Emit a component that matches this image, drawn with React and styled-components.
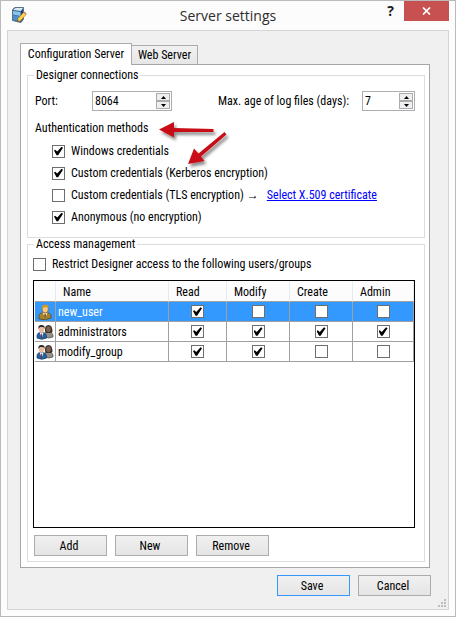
import React, { useState } from "react";
import styled, { createGlobalStyle, css } from "styled-components";

const GlobalStyle = createGlobalStyle`
  *, *::before, *::after { box-sizing: border-box; }
  body { margin: 0; background: #fcfcfc; }
  body, button, input { font: 12px/14px "Roboto Condensed", Roboto, "Liberation Sans", Arial, sans-serif; color: #000; }
`;

const Window = styled.main`
  display: flex;
  flex-direction: column;
  min-height: 100vh;
  padding: 0 6px 6px;
  border: 1px solid #bababa;
  background: #fcfcfc;
`;

const TitleBar = styled.header`
  display: grid;
  grid-template-columns: 72px 1fr 72px;
  height: 29px;
`;

const TitleIcon = styled.span`
  padding: 5px 0 0 4px;
  line-height: 0;
`;

const Title = styled.h1`
  margin: 0;
  padding-top: 4px;
  font: 400 14px/22px "Open Sans", "Noto Sans", sans-serif;
  text-align: center;
  color: #2c2c2c;
`;

const TitleControls = styled.div`
  display: flex;
  justify-content: flex-end;
  align-items: flex-start;
`;

const HelpButton = styled.button`
  width: 27px;
  height: 20px;
  padding: 0;
  border: 0;
  background: none;
  font: 700 14px/20px "Open Sans", sans-serif;
  color: #1c1c1c;
`;

const CloseButton = styled.button`
  display: grid;
  place-items: center;
  width: 45px;
  height: 20px;
  padding: 0;
  border: 0;
  background: #c75050;
`;

const Client = styled.div`
  flex: 1;
  display: flex;
  flex-direction: column;
  padding: 12px 18px 13px 12px;
  border: 1px solid #d4d4d4;
  background: #f0f0f0;
  position: relative;
`;

const TabList = styled.div`
  display: flex;
  align-items: flex-end;
`;

const Tab = styled.button`
  width: 66px;
  height: 19px;
  padding: 0 3px;
  border: 1px solid #acacac;
  border-left: 0;
  border-bottom: 0;
  background: linear-gradient(#f1f1f1, #e6e6e6);
  white-space: nowrap;
  ${(p) =>
    p.$active &&
    css`
      position: relative;
      width: 112px;
      height: 22px;
      margin-bottom: -1px;
      padding-bottom: 2px;
      border-left: 1px solid #acacac;
      background: #fff;
    `}
`;

const Panel = styled.section`
  flex: 1;
  display: flex;
  flex-direction: column;
  padding: 4px 4px 5px 6px;
  border: 1px solid #a6a6a6;
  background: #fff;
`;

const Group = styled.fieldset`
  flex: ${(p) => (p.$grow ? 1 : "none")};
  min-width: 0;
  margin: 0;
  padding: 0 9px 5px 5px;
  border: 1px solid #dcdcdc;
`;

const Legend = styled.legend`
  margin-left: 1px;
  padding: 0 2px;
  line-height: 12px;
`;

const FieldRow = styled.div`
  display: flex;
  align-items: center;
  justify-content: space-between;
  padding: 10px 0 0 2px;
`;

const Field = styled.label`
  display: flex;
  align-items: center;
`;

const FieldLabel = styled.span`
  width: ${(p) => p.$width};
`;

const Spinner = styled.span`
  display: flex;
  width: ${(p) => p.$width};
  height: 20px;
  padding: 1px;
  border: 1px solid #abadb3;
  background: #fff;
`;

const SpinnerInput = styled.input`
  flex: 1;
  min-width: 0;
  padding: 0 1px;
  border: 0;
  outline: 0;
  background: transparent;
`;

const SpinnerButtons = styled.span`
  display: grid;
  grid-template-rows: 8px 8px;
  width: 14px;
`;

const SpinnerButton = styled.button`
  display: grid;
  place-items: center;
  padding: 0;
  border: 1px solid #acacac;
  background: #efefef;
  line-height: 0;
`;

const Methods = styled.div`
  position: relative;
  padding: 10px 0 7px 2px;
`;

const SubHeading = styled.h2`
  margin: 0 0 8px;
  font: inherit;
`;

const OptionList = styled.div`
  display: flex;
  flex-direction: column;
  gap: 6px;
  padding-left: 17px;
`;

const OptionRow = styled.div`
  display: flex;
  align-items: center;
  height: 16px;
  white-space: nowrap;
`;

const OptionLabel = styled.label`
  display: flex;
  align-items: center;
  gap: 6px;
`;

const Arrow = styled.span`
  margin: 0 8px 0 3px;
  font-family: "Liberation Sans", Arial, sans-serif;
`;

const Link = styled.a`
  color: #0000ff;
  text-decoration: underline;
`;

const CheckInput = styled.input`
  appearance: none;
  flex: none;
  display: inline-block;
  width: 13px;
  height: 13px;
  margin: 0;
  padding: 1px;
  border: 1px solid #6e6e6e;
  background: #fff;
  vertical-align: middle;
  &:checked::before {
    content: "";
    display: block;
    width: 9px;
    height: 9px;
    background: #000;
    clip-path: polygon(0 44%, 14% 36%, 36% 56%, 84% 4%, 100% 14%, 46% 96%, 28% 96%);
  }
`;

const Callout = styled.svg`
  position: absolute;
  left: 125px;
  top: 9px;
  pointer-events: none;
`;

const Restrict = styled.div`
  padding: 6px 0 8px;
`;

const GridBox = styled.div`
  min-height: 248px;
  padding-left: 1px;
  border: 1px solid #000;
  background: #fff;
`;

const Grid = styled.table`
  width: 100%;
  table-layout: fixed;
  border-collapse: separate;
  border-spacing: 0;
`;

const HeadCell = styled.th`
  width: ${(p) => p.$width};
  height: 21px;
  padding: 1px 0 0 7px;
  border-right: 1px solid #e3ebf4;
  border-bottom: 1px solid #a0a0a0;
  background: #fcfcfd;
  font-weight: 400;
  text-align: left;
`;

const Row = styled.tr`
  height: 20px;
  background: ${(p) => (p.$selected ? "#3399ff" : "#fff")};
  color: ${(p) => (p.$selected ? "#fff" : "#000")};
`;

const Cell = styled.td`
  height: 20px;
  padding: ${(p) => (p.$name ? "0 2px" : "0")};
  border-right: 1px solid #a0a0a0;
  border-bottom: 1px solid #a0a0a0;
  text-align: ${(p) => (p.$name ? "left" : "center")};
  line-height: ${(p) => (p.$name ? "14px" : "0")};
`;

const ButtonRow = styled.div`
  display: flex;
  justify-content: ${(p) => (p.$end ? "flex-end" : "flex-start")};
  gap: 8px;
  padding: ${(p) => (p.$end ? "7px 0 0" : "7px 0 0 1px")};
  margin-right: ${(p) => (p.$end ? "-1px" : "0")};
`;

const PushButton = styled.button`
  width: 73px;
  height: 21px;
  padding: 0 3px 0 0;
  border: 1px solid ${(p) => (p.$primary ? "#3399ff" : "#acacac")};
  background: linear-gradient(#f0f0f0, #e5e5e5);
`;

const Grip = styled.svg`
  position: absolute;
  right: 2px;
  bottom: 2px;
`;

function ServerIcon() {
  return (
    <svg width="16" height="18" viewBox="0 0 16 18" aria-hidden="true">
      <path d="M1.500 3.500 4 1.500H12.500V13L10 16.500 1.500 14.500Z" fill="#2f6190" stroke="#5f7183" />
      <path d="M2 4 4.500 2H12L10 5Z" fill="#d8e9f6" />
      <path d="M2 5 9.500 6V10L2 8.500Z" fill="#8cc4ee" />
      <path d="M2 9 9.500 10.500V15.500L2 14Z" fill="#4a8fcc" />
      <path d="M10 5.500 12 3V12L10 15Z" fill="#1c4268" />
      <path d="M7 12.500 12.500 6.500 15 8.500 9.500 14.800 6.300 15.800Z" fill="#ffd54a" stroke="#a06a16" strokeWidth=".6" />
      <path d="M12.500 6.500 13.500 5.600 15.700 7.500 15 8.500Z" fill="#d98080" />
      <path d="M6.300 15.800 6.800 14 8 15.200Z" fill="#333" />
    </svg>
  );
}

function UserIcon() {
  return (
    <svg width="14" height="16" viewBox="0 0 14 16" aria-hidden="true">
      <path d="M1 15V12.500C1 9.500 3 8.500 7 8.500S13 9.500 13 12.500V14Q7 17 1 15Z" fill="#a5832f" stroke="#5f4a17" strokeWidth=".8" />
      <path d="M4.500 8.500H9.500L7.500 13.500Z" fill="#fff4d8" />
      <path d="M6.600 9.500H7.500L8 12 7.200 14 6.300 12Z" fill="#6b4512" />
      <ellipse cx="7.200" cy="5" rx="3.200" ry="4" fill="#f2cb8a" stroke="#87602a" strokeWidth=".8" />
      <path d="M3.700 6Q3 .7 7 .6T10.500 4L9 3Q6 3.500 5 4Z" fill="#c99a2c" />
    </svg>
  );
}

function GroupIcon() {
  return (
    <svg width="18" height="16" viewBox="0 0 18 16" aria-hidden="true">
      <path d="M8 12Q8 7.500 12 7.500T17 11V13Q13 15 8 13Z" fill="#968f86" stroke="#514a45" strokeWidth=".7" />
      <path d="M9 7Q8.500 1 12.500 1T16.500 8L15 9H10Z" fill="#3a332e" />
      <ellipse cx="12.500" cy="5.200" rx="2.200" ry="3" fill="#80604d" />
      <path d="M1 14V12Q1 8.300 5.500 8.300T10.500 12V14Q6 16.500 1 14Z" fill="#1e65a8" stroke="#173b65" strokeWidth=".7" />
      <path d="M3.500 8.500H7.500L6 13.500Z" fill="#fff" />
      <path d="M5.200 9.500H6L6.300 13 5.600 14 5 12.500Z" fill="#a12020" />
      <ellipse cx="5.500" cy="5" rx="2.600" ry="3.500" fill="#eab99a" />
      <path d="M2.500 5Q1.700 1 5.500 1T8.600 5L7.300 3H4Z" fill="#252a32" />
    </svg>
  );
}

function CalloutArrows() {
  return (
    <Callout width="76" height="54" viewBox="0 0 76 54" aria-hidden="true">
      <defs>
        <filter id="softShadow" x="-20%" y="-20%" width="150%" height="150%">
          <feDropShadow dx="2" dy="3" stdDeviation="1.500" floodColor="#000" floodOpacity=".45" />
        </filter>
      </defs>
      <g fill="#c91018" filter="url(#softShadow)">
        <path d="M1 9.500 16 2V8L55.500 9V12L16 12V17.500Z" />
        <path d="M30 44 36 28.500 40.500 33.500 66.500 12 68.500 14.500 43 36.500 46.500 41Z" />
      </g>
    </Callout>
  );
}

function SpinField({ label, value, labelWidth, width }) {
  const [current, setCurrent] = useState(value);
  const step = (n) => setCurrent((v) => String(Number(v) + n));
  return (
    <Field>
      <FieldLabel $width={labelWidth}>{label}</FieldLabel>
      <Spinner $width={width}>
        <SpinnerInput aria-label={label} value={current} onChange={(e) => setCurrent(e.target.value)} />
        <SpinnerButtons>
          <SpinnerButton type="button" aria-label="Increase" onClick={() => step(1)}>
            <svg width="5" height="3"><path d="M0 3H5L2.500 0Z" /></svg>
          </SpinnerButton>
          <SpinnerButton type="button" aria-label="Decrease" onClick={() => step(-1)}>
            <svg width="5" height="3"><path d="M0 0H5L2.500 3Z" /></svg>
          </SpinnerButton>
        </SpinnerButtons>
      </Spinner>
    </Field>
  );
}

function Option({ label, checked, children }) {
  return (
    <OptionRow>
      <OptionLabel>
        <CheckInput type="checkbox" defaultChecked={checked} />
        {label}
      </OptionLabel>
      {children}
    </OptionRow>
  );
}

const rights = ["Read", "Modify", "Create", "Admin"];

const accounts = [
  { name: "new_user", icon: UserIcon, selected: true, granted: ["Read"] },
  { name: "administrators", icon: GroupIcon, granted: rights },
  { name: "modify_group", icon: GroupIcon, granted: ["Read", "Modify"] },
];

export default function App() {
  return (
    <>
      <GlobalStyle />
      <Window>
        <TitleBar>
          <TitleIcon><ServerIcon /></TitleIcon>
          <Title>Server settings</Title>
          <TitleControls>
            <HelpButton type="button" aria-label="Help">?</HelpButton>
            <CloseButton type="button" aria-label="Close">
              <svg width="9" height="8" viewBox="0 0 9 8">
                <path d="M1 .5 8 7.500M8 .5 1 7.500" stroke="#fff" strokeWidth="1.700" />
              </svg>
            </CloseButton>
          </TitleControls>
        </TitleBar>
        <Client>
          <TabList role="tablist">
            <Tab type="button" role="tab" aria-selected="true" $active>Configuration Server</Tab>
            <Tab type="button" role="tab" aria-selected="false">Web Server</Tab>
          </TabList>
          <Panel role="tabpanel">
            <Group>
              <Legend>Designer connections</Legend>
              <FieldRow>
                <SpinField label="Port:" value="8064" labelWidth="57px" width="80px" />
                <SpinField label="Max. age of log files (days):" value="7" labelWidth="144px" width="53px" />
              </FieldRow>
              <Methods>
                <SubHeading>Authentication methods</SubHeading>
                <OptionList>
                  <Option label="Windows credentials" checked />
                  <Option label="Custom credentials (Kerberos encryption)" checked />
                  <Option label="Custom credentials (TLS encryption)">
                    <Arrow>→</Arrow>
                    <Link href="#certificate">Select X.509 certificate</Link>
                  </Option>
                  <Option label="Anonymous (no encryption)" checked />
                </OptionList>
                <CalloutArrows />
              </Methods>
            </Group>
            <Group $grow>
              <Legend>Access management</Legend>
              <Restrict>
                <Option label="Restrict Designer access to the following users/groups" />
              </Restrict>
              <GridBox>
                <Grid>
                  <thead>
                    <tr>
                      <HeadCell $width="21px" aria-label="Type" />
                      <HeadCell $width="113px">Name</HeadCell>
                      <HeadCell $width="58px">Read</HeadCell>
                      <HeadCell $width="63px">Modify</HeadCell>
                      <HeadCell $width="63px">Create</HeadCell>
                      <HeadCell>Admin</HeadCell>
                    </tr>
                  </thead>
                  <tbody>
                    {accounts.map(({ name, icon: Icon, selected, granted }) => (
                      <Row key={name} $selected={selected}>
                        <Cell><Icon /></Cell>
                        <Cell $name>{name}</Cell>
                        {rights.map((right) => (
                          <Cell key={right}>
                            <CheckInput
                              type="checkbox"
                              aria-label={`${name}: ${right}`}
                              defaultChecked={granted.includes(right)}
                            />
                          </Cell>
                        ))}
                      </Row>
                    ))}
                  </tbody>
                </Grid>
              </GridBox>
              <ButtonRow>
                <PushButton type="button">Add</PushButton>
                <PushButton type="button">New</PushButton>
                <PushButton type="button">Remove</PushButton>
              </ButtonRow>
            </Group>
          </Panel>
          <ButtonRow $end>
            <PushButton type="button" $primary>Save</PushButton>
            <PushButton type="button">Cancel</PushButton>
          </ButtonRow>
          <Grip width="8" height="8" fill="#bcbcbc" aria-hidden="true">
            <path d="M6 0h2v2h-2zM3 3h2v2h-2zM6 3h2v2h-2zM0 6h2v2h-2zM3 6h2v2h-2zM6 6h2v2h-2z" />
          </Grip>
        </Client>
      </Window>
    </>
  );
}
